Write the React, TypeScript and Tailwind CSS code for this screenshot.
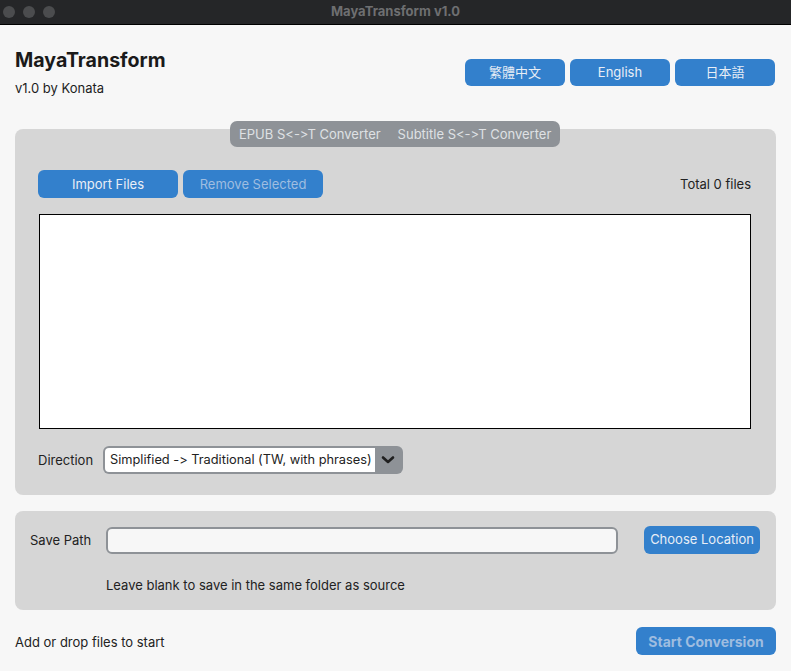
import React from "react";

const font = { fontFamily: "Inter, 'Noto Sans CJK TC', sans-serif" };

export default function App() {
  return (
    <div className="w-[791px] h-[671px] bg-[#f7f7f7] flex flex-col overflow-hidden text-[#1d1d1d] [font-feature-settings:'calt'_0,'liga'_0]" style={font}>
      {/* Title bar */}
      <div className="h-[25px] bg-[#252628] border-b border-black flex items-center relative shrink-0">
        <div className="flex gap-[8px] pl-[3px]">
          <div className="w-[12px] h-[12px] rounded-full bg-[#4b4c4e]" />
          <div className="w-[12px] h-[12px] rounded-full bg-[#4b4c4e]" />
          <div className="w-[12px] h-[12px] rounded-full bg-[#4b4c4e]" />
        </div>
        <div className="absolute inset-0 flex items-center justify-center text-[13px] font-bold text-[#6e6f71]">
          MayaTransform v1.0
        </div>
      </div>

      {/* Header */}
      <div className="flex justify-between px-[15px] pt-[23px]">
        <div>
          <div className="text-[19.6px] font-bold leading-[24px] text-[#1a1a1a]">MayaTransform</div>
          <div className="text-[13px] mt-[8px] leading-[16px]">v1.0 by Konata</div>
        </div>
        <div className="flex gap-[5px] mt-[11px] mr-[1px]">
          <button className="w-[100px] h-[27px] rounded-[6px] bg-[#3380cc] text-[#e8eef6] text-[13px]">繁體中文</button>
          <button className="w-[100px] h-[27px] rounded-[6px] bg-[#3380cc] text-[#e8eef6] text-[13px]">English</button>
          <button className="w-[100px] h-[27px] rounded-[6px] bg-[#3380cc] text-[#e8eef6] text-[13px]">日本語</button>
        </div>
      </div>

      {/* Main panel */}
      <div className="relative mx-[15px] mt-[33px] h-[366px] bg-[#d6d6d6] rounded-[8px] flex flex-col px-[23px] pt-[41px]">
        <div className="absolute left-[215px] top-[-8px] w-[330px] h-[26px] rounded-[7px] bg-[#8e9297] flex items-center pt-[2px] text-[13px] text-[#dfe1e4]">
          <span className="pl-[9px]">EPUB S&lt;-&gt;T Converter</span>
          <span className="pl-[17px]">Subtitle S&lt;-&gt;T Converter</span>
        </div>
        <div className="flex items-center h-[28px]">
          <button className="w-[140px] h-[28px] rounded-[6px] bg-[#3380cc] text-[#e8eef6] text-[13px] pt-[1px]">Import Files</button>
          <button className="ml-[5px] w-[140px] h-[28px] rounded-[6px] bg-[#3380cc] text-[#9fbde0] text-[13px] pt-[1px]">Remove Selected</button>
          <div className="ml-auto mr-[2px] text-[13px] text-[#222] pt-[2px]">Total 0 files</div>
        </div>
        <div className="mt-[16px] ml-[1px] w-[712px] h-[215px] bg-white border border-black" />
        <div className="flex items-center mt-[17px] h-[28px]">
          <span className="text-[13px] text-[#222] w-[65px] pt-[2px]">Direction</span>
          <div className="w-[300px] h-[28px] rounded-[6px] bg-[#8e9297] flex p-[2px]">
            <div className="flex-1 bg-white rounded-l-[4px] flex items-center pl-[5px] text-[12.8px] text-[#222] whitespace-nowrap overflow-hidden">
              Simplified -&gt; Traditional (TW, with phrases)
            </div>
            <div className="w-[26px] flex items-center justify-center">
              <svg width="14" height="10" viewBox="0 0 14 10">
                <path d="M2 2.5 L7 7 L12 2.5" fill="none" stroke="#1f1f1f" strokeWidth="2.6" strokeLinecap="round" strokeLinejoin="round" />
              </svg>
            </div>
          </div>
        </div>
      </div>

      {/* Save panel */}
      <div className="mx-[15px] mt-[16px] h-[99px] bg-[#d6d6d6] rounded-[8px] px-[15px] pt-[15px]">
        <div className="flex items-center h-[28px]">
          <span className="text-[13px] text-[#222] w-[76px] pt-[2px]">Save Path</span>
          <div className="w-[512px] h-[27px] rounded-[6px] border-2 border-[#8e9297] bg-[#f7f7f7]" />
          <button className="ml-[26px] w-[116px] h-[28px] rounded-[6px] bg-[#3380cc] text-[#e8eef6] text-[13px]">Choose Location</button>
        </div>
        <div className="ml-[76px] mt-[22px] text-[13px] text-[#222]">Leave blank to save in the same folder as source</div>
      </div>

      {/* Footer */}
      <div className="flex items-center justify-between px-[15px] mt-[17px] h-[28px]">
        <span className="text-[13px] text-[#222] pt-[3px]">Add or drop files to start</span>
        <button className="w-[140px] h-[28px] rounded-[6px] bg-[#3380cc] text-[#9fbde0] text-[14px] font-bold">Start Conversion</button>
      </div>
    </div>
  );
}
